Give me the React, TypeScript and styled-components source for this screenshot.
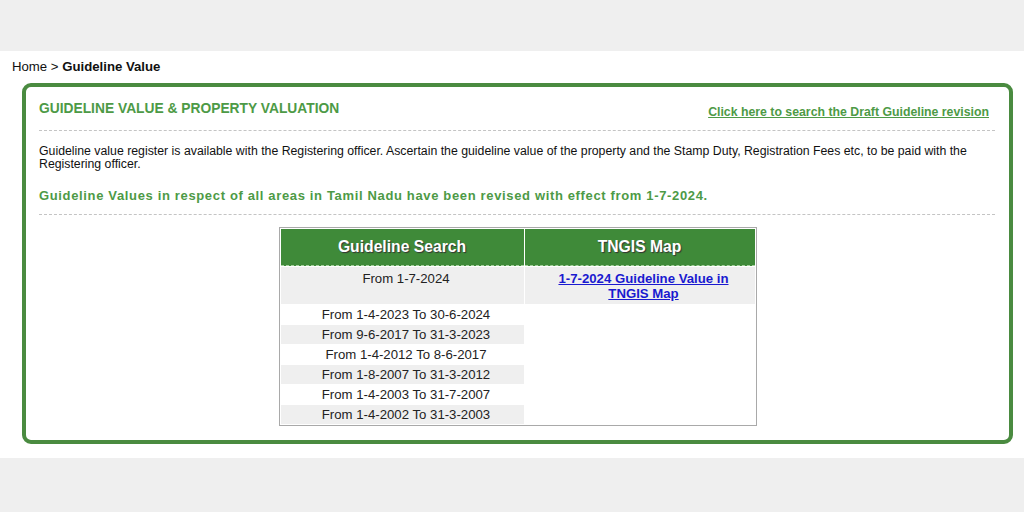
import styled, { createGlobalStyle } from 'styled-components';

const GlobalStyle = createGlobalStyle`
  html, body {
    margin: 0;
    padding: 0;
    background: #efefef;
    font-family: "Liberation Sans", Arial, sans-serif;
  }
`;

const history = [
  'From 1-4-2023 To 30-6-2024',
  'From 9-6-2017 To 31-3-2023',
  'From 1-4-2012 To 8-6-2017',
  'From 1-8-2007 To 31-3-2012',
  'From 1-4-2003 To 31-7-2007',
  'From 1-4-2002 To 31-3-2003',
];

export default function App() {
  return (
    <>
      <GlobalStyle />
      <TopBand />
      <Page>
        <Breadcrumb>
          Home &gt; <strong>Guideline Value</strong>
        </Breadcrumb>
        <Panel>
          <PanelHead>
            <Title>GUIDELINE VALUE &amp; PROPERTY VALUATION</Title>
            <DraftLink href="#">Click here to search the Draft Guideline revision</DraftLink>
          </PanelHead>
          <Rule />
          <Intro>
            Guideline value register is available with the Registering officer. Ascertain the
            guideline value of the property and the Stamp Duty, Registration Fees etc, to be paid
            with the Registering officer.
          </Intro>
          <Notice>
            Guideline Values in respect of all areas in Tamil Nadu have been revised with effect
            from 1-7-2024.
          </Notice>
          <Rule />
          <TableWrap>
            <Table>
              <thead>
                <tr>
                  <Th>Guideline Search</Th>
                  <Th>TNGIS Map</Th>
                </tr>
              </thead>
              <tbody>
                <tr>
                  <FirstCell>From 1-7-2024</FirstCell>
                  <FirstCell>
                    <MapLink href="#">
                      1-7-2024 Guideline Value in
                      <br />
                      TNGIS Map
                    </MapLink>
                  </FirstCell>
                </tr>
                {history.map((label, i) => (
                  <tr key={label}>
                    <Td $shade={i % 2 === 1}>{label}</Td>
                    {i === 0 && <EmptyCell rowSpan={history.length} />}
                  </tr>
                ))}
              </tbody>
            </Table>
          </TableWrap>
        </Panel>
      </Page>
    </>
  );
}

const TopBand = styled.div`
  height: 51px;
  background: #efefef;
`;

const Page = styled.div`
  background: #fff;
  padding: 8px 11px 14px 22px;
  box-sizing: border-box;
  height: 407px;
`;

const Breadcrumb = styled.div`
  font-size: 13.2px;
  color: #111;
  margin-left: -10px;
  line-height: 15px;
  strong {
    font-weight: bold;
  }
`;

const Panel = styled.div`
  margin-top: 9px;
  border: 4px solid #4a8b40;
  border-radius: 9px;
  padding: 13px 14px 12px 13px;
  height: 361px;
  box-sizing: border-box;
`;

const PanelHead = styled.div`
  display: flex;
  justify-content: space-between;
  align-items: flex-start;
  padding: 0 6px 0 0;
`;

const Title = styled.h2`
  margin: 0;
  font-size: 13.8px;
  line-height: 17px;
  font-weight: bold;
  color: #4d9a46;
`;

const DraftLink = styled.a`
  margin-top: 5px;
  font-size: 12.3px;
  line-height: 15px;
  font-weight: bold;
  color: #4d9a46;
  text-decoration: underline;
`;

const Rule = styled.hr`
  margin: 10px 0 0;
  border: none;
  border-top: 1px dashed #c4c4c4;
  height: 0;
`;

const Intro = styled.p`
  margin: 14px 0 0;
  font-size: 12.3px;
  line-height: 13px;
  color: #111;
`;

const Notice = styled.p`
  margin: 17px 0 11px;
  font-size: 13px;
  line-height: 15px;
  font-weight: bold;
  letter-spacing: 0.65px;
  color: #4d9a46;
`;

const TableWrap = styled.div`
  display: flex;
  justify-content: center;
  margin-top: 12px;
  padding-left: 1px;
`;

const Table = styled.table`
  width: 478px;
  border: 1px solid #a9a9a9;
  border-collapse: separate;
  border-spacing: 1px;
  font-size: 13.2px;
  color: #222;
`;

const Th = styled.th`
  background: #3f8a39;
  color: #fff;
  font-size: 15.7px;
  font-weight: bold;
  height: 36px;
  padding: 0;
  text-shadow: 1px 1px 1px #333;
  border-bottom: 1px dashed #a6d29f;
  &:first-child {
    width: 243px;
  }
`;

const FirstCell = styled.td`
  background: #efefef;
  text-align: center;
  vertical-align: top;
  height: 33px;
  padding: 4px 0 0 8px;
  line-height: 15px;
`;

const Td = styled.td<{ $shade: boolean }>`
  background: ${p => (p.$shade ? '#efefef' : '#fff')};
  text-align: center;
  height: 19px;
  padding: 0 0 0 8px;
  line-height: 19px;
  white-space: nowrap;
`;

const EmptyCell = styled.td`
  background: #fff;
`;

const MapLink = styled.a`
  color: #1a1ad0;
  font-weight: bold;
  text-decoration: underline;
`;
